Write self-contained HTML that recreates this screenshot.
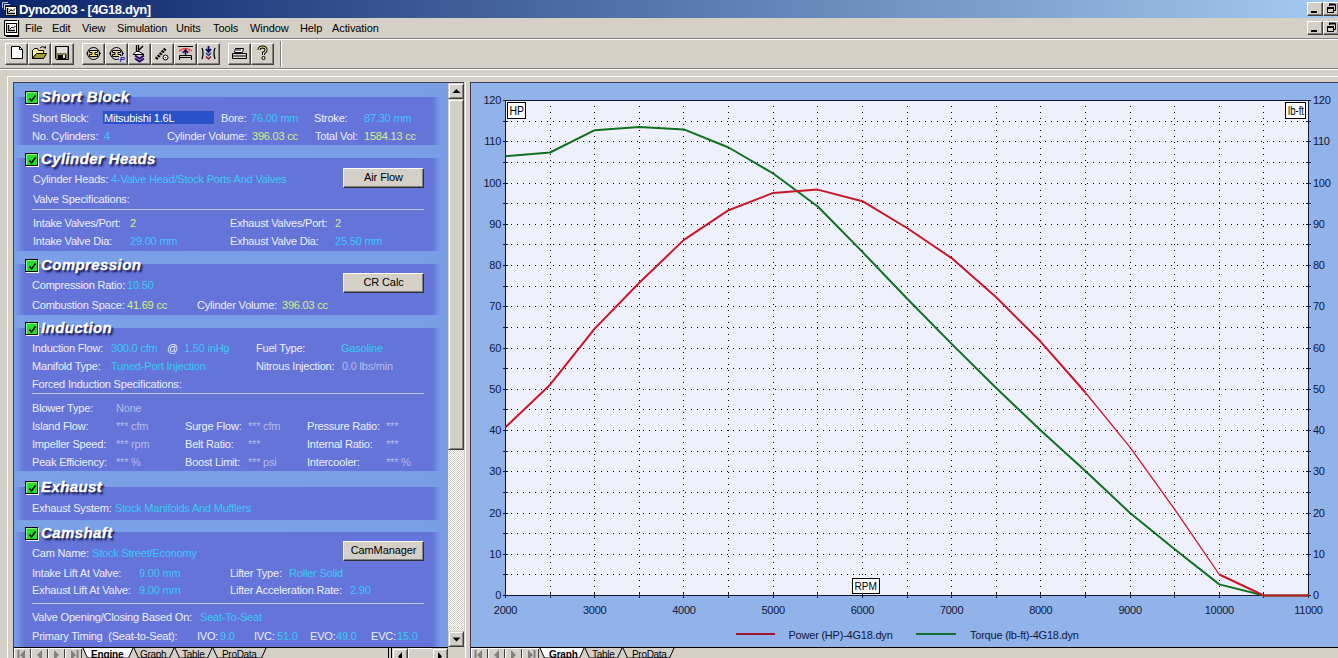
<!DOCTYPE html>
<html><head><meta charset="utf-8"><style>
*{margin:0;padding:0;box-sizing:border-box}
html,body{width:1338px;height:658px;overflow:hidden;background:#d4d0c8;font-family:"Liberation Sans",sans-serif;font-size:11px;position:relative}
.a{position:absolute}
.t{position:absolute;white-space:nowrap;line-height:13px;letter-spacing:-0.2px}
#titlebar{left:0;top:0;width:1338px;height:18px;background:linear-gradient(to right,#0a246a 0%,#a6caf0 100%)}
.wbtn{position:absolute;width:16px;height:14px;background:#d4d0c8;border-top:1px solid #fff;border-left:1px solid #fff;border-right:1px solid #404040;border-bottom:1px solid #404040;box-shadow:inset -1px -1px 0 #808080}
.hl{position:absolute;height:1px}
.vl{position:absolute;width:1px}
.tb{position:absolute;top:43px;width:22px;height:22px;background:#d4d0c8;border-top:1px solid #fff;border-left:1px solid #fff;border-right:1px solid #404040;border-bottom:1px solid #404040;box-shadow:inset -1px -1px 0 #808080}
.sec{position:absolute;left:14px;width:434px;background:linear-gradient(to right,#7aa0e8 0px,#6474d8 11px,#6474d8 418px,#7a9ee4 427px,#7a9ee4 434px)}
.cb{position:absolute;left:25px;width:13px;height:13px;background:#22e02a;border:1px solid #000;box-shadow:1px 1px 0 #fff, inset 1px 1px 0 #90f090}
.st{position:absolute;left:41px;color:#fff;font-weight:bold;font-style:italic;font-size:15px;line-height:16px;letter-spacing:0.4px;-webkit-text-stroke:0.35px #fff;text-shadow:1px 1px 0 #203068,2px 2px 1px #283070,2px 3px 2px #404898}
.lb{color:#eef0ff}
.cy{color:#3cc8f8}
.yl{color:#d8f080}
.gr{color:#b4bce8}
.sep{position:absolute;left:32px;width:392px;height:1px;background:#c0c8f0}
.btn{position:absolute;left:343px;width:81px;height:20px;background:#d4d0c8;border-top:1px solid #fff;border-left:1px solid #fff;border-right:1px solid #303030;border-bottom:1px solid #303030;box-shadow:inset -1px -1px 0 #808080;text-align:center;line-height:17px;color:#000;letter-spacing:-0.1px}
</style></head><body>
<div id="titlebar" class="a"></div>
<div class="t" style="left:19px;top:3px;color:#fff;font-weight:bold;font-size:13px;line-height:14px;letter-spacing:-0.4px">Dyno2003 - [4G18.dyn]</div>
<svg class="a" style="left:0;top:0" width="18" height="18"><path d="M2.5 8 V2.5 H8" fill="none" stroke="#b8c0e0"/><path d="M4.5 10 V4.5 H10" fill="none" stroke="#d0d8f0"/><rect x="5.5" y="6.5" width="11" height="9" fill="#fffcf0" stroke="#101010"/><path d="M7.5 8 V13.5 H15" fill="none" stroke="#000" stroke-width="1.5"/><path d="M9 12 L11 10 L12.5 11 L15 8.5" fill="none" stroke="#000"/><path d="M9 10 L11 9 L13 11 L15 10.5" fill="none" stroke="#806040" stroke-width="0.8"/></svg>
<div class="wbtn" style="left:1307px;top:2px"><div class="a" style="left:3px;top:8px;width:6px;height:2px;background:#000"></div></div>
<div class="wbtn" style="left:1323px;top:2px"><svg class="a" style="left:1px;top:0" width="14" height="12"><path d="M4.5 3 V1.5 H10.5 V7.5 H9" fill="none" stroke="#000"/><path d="M4 1.5 H10.5" stroke="#000" stroke-width="2"/><rect x="2.5" y="4.5" width="6" height="5" fill="none" stroke="#000"/><path d="M2 5 H8.5" stroke="#000" stroke-width="2"/></svg></div>
<div class="a" style="left:0;top:18px;width:1338px;height:20px;background:#d4d0c8"></div>
<svg class="a" style="left:4px;top:20px" width="16" height="17"><path d="M0.5 0.5 H13 L14.5 -1 V15.5 H0.5 Z" fill="#fff" stroke="#000"/><path d="M14.5 2 V16.5 H2" fill="none" stroke="#000" stroke-width="1.2"/><rect x="2.5" y="3.5" width="10" height="9" fill="#fff" stroke="#000"/><path d="M4.5 5 V10.5 H11" fill="none" stroke="#000" stroke-width="1.5"/><path d="M6 9 L8 7 L9.5 8 L11.5 6" fill="none" stroke="#000"/></svg>
<div class="t" style="left:25px;top:22px;color:#000;letter-spacing:-0.1px">File</div>
<div class="t" style="left:52px;top:22px;color:#000;letter-spacing:-0.1px">Edit</div>
<div class="t" style="left:82px;top:22px;color:#000;letter-spacing:-0.1px">View</div>
<div class="t" style="left:117px;top:22px;color:#000;letter-spacing:-0.1px">Simulation</div>
<div class="t" style="left:176px;top:22px;color:#000;letter-spacing:-0.1px">Units</div>
<div class="t" style="left:213px;top:22px;color:#000;letter-spacing:-0.1px">Tools</div>
<div class="t" style="left:250px;top:22px;color:#000;letter-spacing:-0.1px">Window</div>
<div class="t" style="left:300px;top:22px;color:#000;letter-spacing:-0.1px">Help</div>
<div class="t" style="left:332px;top:22px;color:#000;letter-spacing:-0.1px">Activation</div>
<div class="wbtn" style="left:1307px;top:21px"><div class="a" style="left:3px;top:8px;width:6px;height:2px;background:#000"></div></div>
<div class="wbtn" style="left:1323px;top:21px"><svg class="a" style="left:1px;top:0" width="14" height="12"><path d="M4.5 3 V1.5 H10.5 V7.5 H9" fill="none" stroke="#000"/><path d="M4 1.5 H10.5" stroke="#000" stroke-width="2"/><rect x="2.5" y="4.5" width="6" height="5" fill="none" stroke="#000"/><path d="M2 5 H8.5" stroke="#000" stroke-width="2"/></svg></div>
<div class="hl" style="left:0;top:38px;width:1338px;background:#808080"></div>
<div class="hl" style="left:0;top:39px;width:1338px;background:#fff"></div>
<div class="tb" style="left:5px;width:23px"><svg class="a" style="left:-1px;top:-1px" width="23" height="22"><path d="M6.5 3.5 H14.5 L17.5 6.5 V15.5 H6.5 Z" fill="#fff" stroke="#000"/><path d="M14.5 3.5 V6.5 H17.5" fill="none" stroke="#000"/></svg></div>
<div class="tb" style="left:28px;width:23px"><svg class="a" style="left:-1px;top:-1px" width="23" height="22"><path d="M4.5 7.5 L6.5 5.5 H9.5 L10.5 7.5 H15.5 V10.5 H8.5 L4.5 15.5 Z" fill="#f8f0a0" stroke="#000"/><path d="M4.5 15.5 L8.5 10.5 H18.5 L15.5 15.5 Z" fill="#a0a030" stroke="#000"/><path d="M12 5 Q15 2 17 5" fill="none" stroke="#000"/><path d="M16 4 L18 6 L18 3 Z" fill="#000"/></svg></div>
<div class="tb" style="left:51px;width:23px"><svg class="a" style="left:-1px;top:-1px" width="23" height="22"><path d="M4.5 3.5 H17.5 V16.5 H5.5 L4.5 15.5 Z" fill="#808058" stroke="#000"/><rect x="6" y="4" width="10" height="6" fill="#e0e0d8"/><rect x="7" y="12" width="8" height="4" fill="#000"/><rect x="12" y="12" width="2" height="3" fill="#e8e8e0"/></svg></div>
<div class="tb" style="left:82px;width:23px"><svg class="a" style="left:-1px;top:-1px" width="23" height="22"><ellipse cx="11.5" cy="10.5" rx="6" ry="6" fill="none" stroke="#000"/><path d="M7.5 7.5 H15.5 V9.5 H13 V11.5 H15.5 V13.5 H7.5 V11.5 H10 V9.5 H7.5 Z" fill="#e8e070" stroke="#000"/><path d="M4 10.5 L6 8.5 V12.5 Z M19 10.5 L17 8.5 V12.5 Z" fill="#000"/></svg></div>
<div class="tb" style="left:105px;width:23px"><svg class="a" style="left:-1px;top:-1px" width="23" height="22"><ellipse cx="11.5" cy="10.5" rx="6" ry="6" fill="none" stroke="#000"/><path d="M7.5 7.5 H15.5 V9.5 H13 V11.5 H15.5 V13.5 H7.5 V11.5 H10 V9.5 H7.5 Z" fill="#e8e070" stroke="#000"/><path d="M4 10.5 L6 8.5 V12.5 Z M19 10.5 L17 8.5 V12.5 Z" fill="#000"/><rect x="14" y="13" width="6" height="6" fill="#d4d0c8"/><text x="14.5" y="19" font-family="Liberation Sans" font-size="8" font-weight="bold" font-style="italic" fill="#1818c8">P</text></svg></div>
<div class="tb" style="left:128px;width:23px"><svg class="a" style="left:-1px;top:-1px" width="23" height="22"><path d="M8.5 2 V8 M10.5 2 V8" stroke="#000" stroke-width="1.3"/><path d="M11 7 L15 3" stroke="#000" stroke-width="1.5"/><path d="M8 8.5 H11 L16 11.5 H5 Z" fill="#fff" stroke="#000"/><path d="M7 12.5 L11.5 15.5 L16 12.5 M7 15.5 L11.5 18.5 L16 15.5" fill="none" stroke="#280870" stroke-width="2"/></svg></div>
<div class="tb" style="left:151px;width:23px"><svg class="a" style="left:-1px;top:-1px" width="23" height="22"><path d="M5 16 L15 5" stroke="#000" stroke-width="3" stroke-dasharray="2 1"/><circle cx="14.5" cy="14.5" r="2.5" fill="#fff" stroke="#000"/><circle cx="14.5" cy="14.5" r="0.8" fill="#101060"/></svg></div>
<div class="tb" style="left:174px;width:23px"><svg class="a" style="left:-1px;top:-1px" width="23" height="22"><path d="M4 3.5 H19" stroke="#000"/><path d="M5 8 Q11.5 3 18 8" fill="none" stroke="#e04040" stroke-width="1.5"/><path d="M7 9 Q11.5 6 16 9" fill="none" stroke="#e06060" stroke-width="1"/><path d="M11.5 7 V12 M9 10 L11.5 7 L14 10" stroke="#101060" stroke-width="1.5" fill="none"/><path d="M5.5 17 V12.5 H17.5 V17 M5.5 14.5 H17.5" fill="none" stroke="#000"/></svg></div>
<div class="tb" style="left:197px;width:23px"><svg class="a" style="left:-1px;top:-1px" width="23" height="22"><path d="M5 5 Q7 10 5 16 M18 5 Q16 10 18 16" fill="none" stroke="#000" stroke-width="1.3"/><path d="M11.5 3 V8 M9 6 L11.5 9 L14 6" stroke="#101060" stroke-width="1.8" fill="none"/><path d="M9 10 L11.5 12.5 L14 10" stroke="#303080" stroke-width="1.5" fill="none"/><path d="M9 13.5 L11.5 16 L14 13.5" stroke="#802020" stroke-width="1.5" fill="none"/></svg></div>
<div class="tb" style="left:228px;width:23px"><svg class="a" style="left:-1px;top:-1px" width="23" height="22"><path d="M7.5 5.5 H15.5 L14.5 9.5 H6.5 Z" fill="#fff" stroke="#000"/><path d="M4.5 10.5 H18.5 V15.5 H4.5 Z" fill="#d8d8d0" stroke="#000"/><path d="M5 13 H18" stroke="#000"/><path d="M8 7 H13" stroke="#000"/></svg></div>
<div class="tb" style="left:251px;width:23px"><svg class="a" style="left:-1px;top:-1px" width="23" height="22"><path d="M8 7 Q8 4 11.5 4 Q15 4 15 7 Q15 9 12.5 10 V12" fill="none" stroke="#000" stroke-width="3"/><path d="M8 7 Q8 4 11.5 4 Q15 4 15 7 Q15 9 12.5 10 V12" fill="none" stroke="#f0f080" stroke-width="1.2"/><circle cx="12.5" cy="15" r="1.6" fill="#f0f080" stroke="#000"/></svg></div>
<div class="vl" style="left:280px;top:41px;height:26px;background:#808080"></div>
<div class="vl" style="left:281px;top:41px;height:26px;background:#fff"></div>
<div class="hl" style="left:0;top:68px;width:1338px;background:#808080"></div>
<div class="hl" style="left:0;top:69px;width:1338px;background:#fff"></div>
<div class="hl" style="left:7px;top:76px;width:1331px;background:#fff"></div>
<div class="vl" style="left:7px;top:76px;height:582px;background:#fff"></div>
<div class="hl" style="left:13px;top:82px;width:1325px;background:#3c4050"></div>
<div class="vl" style="left:13px;top:82px;height:576px;background:#3c4050"></div>
<div class="a" style="left:14px;top:83px;width:434px;height:564px;background:linear-gradient(to right,#7aa0e8 0,#7a9ee6 100%)"></div>
<div class="sec" style="top:97px;height:48px"></div>
<div class="sec" style="top:158px;height:93px"></div>
<div class="sec" style="top:264px;height:51px"></div>
<div class="sec" style="top:328px;height:143px"></div>
<div class="sec" style="top:487px;height:33px"></div>
<div class="sec" style="top:532px;height:115px"></div>
<div class="cb" style="top:91px"><svg class="a" style="left:1px;top:1px" width="10" height="10"><path d="M2.5 5.5 L4.5 8 L8.5 2.5" stroke="#000" stroke-width="1.5" fill="none"/></svg></div>
<div class="st" style="top:89px">Short Block</div>
<div class="cb" style="top:153px"><svg class="a" style="left:1px;top:1px" width="10" height="10"><path d="M2.5 5.5 L4.5 8 L8.5 2.5" stroke="#000" stroke-width="1.5" fill="none"/></svg></div>
<div class="st" style="top:151px">Cylinder Heads</div>
<div class="cb" style="top:259px"><svg class="a" style="left:1px;top:1px" width="10" height="10"><path d="M2.5 5.5 L4.5 8 L8.5 2.5" stroke="#000" stroke-width="1.5" fill="none"/></svg></div>
<div class="st" style="top:257px">Compression</div>
<div class="cb" style="top:322px"><svg class="a" style="left:1px;top:1px" width="10" height="10"><path d="M2.5 5.5 L4.5 8 L8.5 2.5" stroke="#000" stroke-width="1.5" fill="none"/></svg></div>
<div class="st" style="top:320px">Induction</div>
<div class="cb" style="top:481px"><svg class="a" style="left:1px;top:1px" width="10" height="10"><path d="M2.5 5.5 L4.5 8 L8.5 2.5" stroke="#000" stroke-width="1.5" fill="none"/></svg></div>
<div class="st" style="top:479px">Exhaust</div>
<div class="cb" style="top:527px"><svg class="a" style="left:1px;top:1px" width="10" height="10"><path d="M2.5 5.5 L4.5 8 L8.5 2.5" stroke="#000" stroke-width="1.5" fill="none"/></svg></div>
<div class="st" style="top:525px">Camshaft</div>
<div class="a" style="left:103px;top:111px;width:111px;height:13px;background:#2a52c8"></div>
<div class="t lb" style="left:32px;top:112px;">Short Block:</div>
<div class="t " style="left:104px;top:112px;color:#fff">Mitsubishi 1.6L</div>
<div class="t lb" style="left:221px;top:112px;">Bore:</div>
<div class="t cy" style="left:251px;top:112px;">76.00 mm</div>
<div class="t lb" style="left:314px;top:112px;">Stroke:</div>
<div class="t cy" style="left:364px;top:112px;">87.30 mm</div>
<div class="t lb" style="left:32px;top:130px;">No. Cylinders:</div>
<div class="t cy" style="left:104px;top:130px;">4</div>
<div class="t lb" style="left:167px;top:130px;">Cylinder Volume:</div>
<div class="t yl" style="left:252px;top:130px;">396.03 cc</div>
<div class="t lb" style="left:315px;top:130px;">Total Vol:</div>
<div class="t yl" style="left:364px;top:130px;">1584.13 cc</div>
<div class="t lb" style="left:33px;top:173px;">Cylinder Heads:</div>
<div class="t cy" style="left:111px;top:173px;">4-Valve Head/Stock Ports And Valves</div>
<div class="btn" style="top:168px">Air Flow</div>
<div class="t lb" style="left:33px;top:193px;">Valve Specifications:</div>
<div class="sep" style="top:209px"></div>
<div class="t lb" style="left:33px;top:217px;">Intake Valves/Port:</div>
<div class="t yl" style="left:130px;top:217px;">2</div>
<div class="t lb" style="left:230px;top:217px;">Exhaust Valves/Port:</div>
<div class="t yl" style="left:335px;top:217px;">2</div>
<div class="t lb" style="left:33px;top:235px;">Intake Valve Dia:</div>
<div class="t cy" style="left:130px;top:235px;">29.00 mm</div>
<div class="t lb" style="left:230px;top:235px;">Exhaust Valve Dia:</div>
<div class="t cy" style="left:335px;top:235px;">25.50 mm</div>
<div class="t lb" style="left:32px;top:279px;">Compression Ratio:</div>
<div class="t cy" style="left:127px;top:279px;">10.50</div>
<div class="btn" style="top:273px">CR Calc</div>
<div class="t lb" style="left:32px;top:299px;">Combustion Space:</div>
<div class="t yl" style="left:127px;top:299px;">41.69 cc</div>
<div class="t lb" style="left:197px;top:299px;">Cylinder Volume:</div>
<div class="t yl" style="left:282px;top:299px;">396.03 cc</div>
<div class="t lb" style="left:32px;top:342px;">Induction Flow:</div>
<div class="t cy" style="left:111px;top:342px;">300.0 cfm</div>
<div class="t lb" style="left:167px;top:342px;">@</div>
<div class="t cy" style="left:184px;top:342px;">1.50 inHg</div>
<div class="t lb" style="left:256px;top:342px;">Fuel Type:</div>
<div class="t cy" style="left:341px;top:342px;">Gasoline</div>
<div class="t lb" style="left:32px;top:360px;">Manifold Type:</div>
<div class="t cy" style="left:111px;top:360px;">Tuned-Port Injection</div>
<div class="t lb" style="left:256px;top:360px;">Nitrous Injection:</div>
<div class="t gr" style="left:342px;top:360px;">0.0 lbs/min</div>
<div class="t lb" style="left:32px;top:378px;">Forced Induction Specifications:</div>
<div class="sep" style="top:393px"></div>
<div class="t lb" style="left:32px;top:402px;">Blower Type:</div>
<div class="t gr" style="left:116px;top:402px;">None</div>
<div class="t lb" style="left:32px;top:420px;">Island Flow:</div>
<div class="t gr" style="left:116px;top:420px;">*** cfm</div>
<div class="t lb" style="left:185px;top:420px;">Surge Flow:</div>
<div class="t gr" style="left:248px;top:420px;">*** cfm</div>
<div class="t lb" style="left:307px;top:420px;">Pressure Ratio:</div>
<div class="t gr" style="left:386px;top:420px;">***</div>
<div class="t lb" style="left:32px;top:438px;">Impeller Speed:</div>
<div class="t gr" style="left:116px;top:438px;">*** rpm</div>
<div class="t lb" style="left:185px;top:438px;">Belt Ratio:</div>
<div class="t gr" style="left:248px;top:438px;">***</div>
<div class="t lb" style="left:307px;top:438px;">Internal Ratio:</div>
<div class="t gr" style="left:386px;top:438px;">***</div>
<div class="t lb" style="left:32px;top:456px;">Peak Efficiency:</div>
<div class="t gr" style="left:116px;top:456px;">*** %</div>
<div class="t lb" style="left:185px;top:456px;">Boost Limit:</div>
<div class="t gr" style="left:248px;top:456px;">*** psi</div>
<div class="t lb" style="left:307px;top:456px;">Intercooler:</div>
<div class="t gr" style="left:386px;top:456px;">*** %</div>
<div class="t lb" style="left:32px;top:502px;">Exhaust System:</div>
<div class="t cy" style="left:115px;top:502px;">Stock Manifolds And Mufflers</div>
<div class="t lb" style="left:32px;top:547px;">Cam Name:</div>
<div class="t cy" style="left:92px;top:547px;">Stock Street/Economy</div>
<div class="btn" style="top:541px">CamManager</div>
<div class="t lb" style="left:32px;top:567px;">Intake Lift At Valve:</div>
<div class="t cy" style="left:139px;top:567px;">9.00 mm</div>
<div class="t lb" style="left:230px;top:567px;">Lifter Type:</div>
<div class="t cy" style="left:289px;top:567px;">Roller Solid</div>
<div class="t lb" style="left:32px;top:584px;">Exhaust Lift At Valve:</div>
<div class="t cy" style="left:139px;top:584px;">9.00 mm</div>
<div class="t lb" style="left:230px;top:584px;">Lifter Acceleration Rate:</div>
<div class="t cy" style="left:350px;top:584px;">2.90</div>
<div class="sep" style="top:603px"></div>
<div class="t lb" style="left:32px;top:611px;">Valve Opening/Closing Based On:</div>
<div class="t cy" style="left:200px;top:611px;">Seat-To-Seat</div>
<div class="t lb" style="left:32px;top:630px;">Primary Timing&nbsp; (Seat-to-Seat):</div>
<div class="t lb" style="left:197px;top:630px;">IVO:</div>
<div class="t cy" style="left:220px;top:630px;">9.0</div>
<div class="t lb" style="left:254px;top:630px;">IVC:</div>
<div class="t cy" style="left:277px;top:630px;">51.0</div>
<div class="t lb" style="left:310px;top:630px;">EVO:</div>
<div class="t cy" style="left:336px;top:630px;">49.0</div>
<div class="t lb" style="left:371px;top:630px;">EVC:</div>
<div class="t cy" style="left:397px;top:630px;">15.0</div>
<div class="a" style="left:471px;top:83px;width:867px;height:564px;background:#92b2ea"></div>
<svg class="a" style="left:0;top:0" width="1338" height="658">
<rect x="505" y="100" width="803" height="495" fill="#eef0fc"/>
<line x1="505" y1="574.5" x2="1308" y2="574.5" stroke="#000" stroke-width="1" stroke-dasharray="1 5"/>
<line x1="505" y1="554.5" x2="1308" y2="554.5" stroke="#000" stroke-width="1" stroke-dasharray="1 5"/>
<line x1="505" y1="533.5" x2="1308" y2="533.5" stroke="#000" stroke-width="1" stroke-dasharray="1 5"/>
<line x1="505" y1="513.5" x2="1308" y2="513.5" stroke="#000" stroke-width="1" stroke-dasharray="1 5"/>
<line x1="505" y1="492.5" x2="1308" y2="492.5" stroke="#000" stroke-width="1" stroke-dasharray="1 5"/>
<line x1="505" y1="471.5" x2="1308" y2="471.5" stroke="#000" stroke-width="1" stroke-dasharray="1 5"/>
<line x1="505" y1="451.5" x2="1308" y2="451.5" stroke="#000" stroke-width="1" stroke-dasharray="1 5"/>
<line x1="505" y1="430.5" x2="1308" y2="430.5" stroke="#000" stroke-width="1" stroke-dasharray="1 5"/>
<line x1="505" y1="409.5" x2="1308" y2="409.5" stroke="#000" stroke-width="1" stroke-dasharray="1 5"/>
<line x1="505" y1="389.5" x2="1308" y2="389.5" stroke="#000" stroke-width="1" stroke-dasharray="1 5"/>
<line x1="505" y1="368.5" x2="1308" y2="368.5" stroke="#000" stroke-width="1" stroke-dasharray="1 5"/>
<line x1="505" y1="348.5" x2="1308" y2="348.5" stroke="#000" stroke-width="1" stroke-dasharray="1 5"/>
<line x1="505" y1="327.5" x2="1308" y2="327.5" stroke="#000" stroke-width="1" stroke-dasharray="1 5"/>
<line x1="505" y1="306.5" x2="1308" y2="306.5" stroke="#000" stroke-width="1" stroke-dasharray="1 5"/>
<line x1="505" y1="286.5" x2="1308" y2="286.5" stroke="#000" stroke-width="1" stroke-dasharray="1 5"/>
<line x1="505" y1="265.5" x2="1308" y2="265.5" stroke="#000" stroke-width="1" stroke-dasharray="1 5"/>
<line x1="505" y1="244.5" x2="1308" y2="244.5" stroke="#000" stroke-width="1" stroke-dasharray="1 5"/>
<line x1="505" y1="224.5" x2="1308" y2="224.5" stroke="#000" stroke-width="1" stroke-dasharray="1 5"/>
<line x1="505" y1="203.5" x2="1308" y2="203.5" stroke="#000" stroke-width="1" stroke-dasharray="1 5"/>
<line x1="505" y1="183.5" x2="1308" y2="183.5" stroke="#000" stroke-width="1" stroke-dasharray="1 5"/>
<line x1="505" y1="162.5" x2="1308" y2="162.5" stroke="#000" stroke-width="1" stroke-dasharray="1 5"/>
<line x1="505" y1="141.5" x2="1308" y2="141.5" stroke="#000" stroke-width="1" stroke-dasharray="1 5"/>
<line x1="505" y1="121.5" x2="1308" y2="121.5" stroke="#000" stroke-width="1" stroke-dasharray="1 5"/>
<line x1="550.5" y1="100" x2="550.5" y2="595" stroke="#000" stroke-width="1" stroke-dasharray="1 5"/>
<line x1="594.5" y1="100" x2="594.5" y2="595" stroke="#000" stroke-width="1" stroke-dasharray="1 5"/>
<line x1="639.5" y1="100" x2="639.5" y2="595" stroke="#000" stroke-width="1" stroke-dasharray="1 5"/>
<line x1="683.5" y1="100" x2="683.5" y2="595" stroke="#000" stroke-width="1" stroke-dasharray="1 5"/>
<line x1="728.5" y1="100" x2="728.5" y2="595" stroke="#000" stroke-width="1" stroke-dasharray="1 5"/>
<line x1="773.5" y1="100" x2="773.5" y2="595" stroke="#000" stroke-width="1" stroke-dasharray="1 5"/>
<line x1="817.5" y1="100" x2="817.5" y2="595" stroke="#000" stroke-width="1" stroke-dasharray="1 5"/>
<line x1="862.5" y1="100" x2="862.5" y2="595" stroke="#000" stroke-width="1" stroke-dasharray="1 5"/>
<line x1="907.5" y1="100" x2="907.5" y2="595" stroke="#000" stroke-width="1" stroke-dasharray="1 5"/>
<line x1="951.5" y1="100" x2="951.5" y2="595" stroke="#000" stroke-width="1" stroke-dasharray="1 5"/>
<line x1="996.5" y1="100" x2="996.5" y2="595" stroke="#000" stroke-width="1" stroke-dasharray="1 5"/>
<line x1="1040.5" y1="100" x2="1040.5" y2="595" stroke="#000" stroke-width="1" stroke-dasharray="1 5"/>
<line x1="1085.5" y1="100" x2="1085.5" y2="595" stroke="#000" stroke-width="1" stroke-dasharray="1 5"/>
<line x1="1130.5" y1="100" x2="1130.5" y2="595" stroke="#000" stroke-width="1" stroke-dasharray="1 5"/>
<line x1="1174.5" y1="100" x2="1174.5" y2="595" stroke="#000" stroke-width="1" stroke-dasharray="1 5"/>
<line x1="1219.5" y1="100" x2="1219.5" y2="595" stroke="#000" stroke-width="1" stroke-dasharray="1 5"/>
<line x1="1263.5" y1="100" x2="1263.5" y2="595" stroke="#000" stroke-width="1" stroke-dasharray="1 5"/>
<rect x="505.5" y="100.5" width="803" height="495" fill="none" stroke="#101838" stroke-width="1"/>
<line x1="503" y1="595.5" x2="508" y2="595.5" stroke="#101838"/>
<line x1="1306" y1="595.5" x2="1311" y2="595.5" stroke="#101838"/>
<line x1="503" y1="574.5" x2="508" y2="574.5" stroke="#101838"/>
<line x1="1306" y1="574.5" x2="1311" y2="574.5" stroke="#101838"/>
<line x1="503" y1="554.5" x2="508" y2="554.5" stroke="#101838"/>
<line x1="1306" y1="554.5" x2="1311" y2="554.5" stroke="#101838"/>
<line x1="503" y1="533.5" x2="508" y2="533.5" stroke="#101838"/>
<line x1="1306" y1="533.5" x2="1311" y2="533.5" stroke="#101838"/>
<line x1="503" y1="513.5" x2="508" y2="513.5" stroke="#101838"/>
<line x1="1306" y1="513.5" x2="1311" y2="513.5" stroke="#101838"/>
<line x1="503" y1="492.5" x2="508" y2="492.5" stroke="#101838"/>
<line x1="1306" y1="492.5" x2="1311" y2="492.5" stroke="#101838"/>
<line x1="503" y1="471.5" x2="508" y2="471.5" stroke="#101838"/>
<line x1="1306" y1="471.5" x2="1311" y2="471.5" stroke="#101838"/>
<line x1="503" y1="451.5" x2="508" y2="451.5" stroke="#101838"/>
<line x1="1306" y1="451.5" x2="1311" y2="451.5" stroke="#101838"/>
<line x1="503" y1="430.5" x2="508" y2="430.5" stroke="#101838"/>
<line x1="1306" y1="430.5" x2="1311" y2="430.5" stroke="#101838"/>
<line x1="503" y1="409.5" x2="508" y2="409.5" stroke="#101838"/>
<line x1="1306" y1="409.5" x2="1311" y2="409.5" stroke="#101838"/>
<line x1="503" y1="389.5" x2="508" y2="389.5" stroke="#101838"/>
<line x1="1306" y1="389.5" x2="1311" y2="389.5" stroke="#101838"/>
<line x1="503" y1="368.5" x2="508" y2="368.5" stroke="#101838"/>
<line x1="1306" y1="368.5" x2="1311" y2="368.5" stroke="#101838"/>
<line x1="503" y1="348.5" x2="508" y2="348.5" stroke="#101838"/>
<line x1="1306" y1="348.5" x2="1311" y2="348.5" stroke="#101838"/>
<line x1="503" y1="327.5" x2="508" y2="327.5" stroke="#101838"/>
<line x1="1306" y1="327.5" x2="1311" y2="327.5" stroke="#101838"/>
<line x1="503" y1="306.5" x2="508" y2="306.5" stroke="#101838"/>
<line x1="1306" y1="306.5" x2="1311" y2="306.5" stroke="#101838"/>
<line x1="503" y1="286.5" x2="508" y2="286.5" stroke="#101838"/>
<line x1="1306" y1="286.5" x2="1311" y2="286.5" stroke="#101838"/>
<line x1="503" y1="265.5" x2="508" y2="265.5" stroke="#101838"/>
<line x1="1306" y1="265.5" x2="1311" y2="265.5" stroke="#101838"/>
<line x1="503" y1="244.5" x2="508" y2="244.5" stroke="#101838"/>
<line x1="1306" y1="244.5" x2="1311" y2="244.5" stroke="#101838"/>
<line x1="503" y1="224.5" x2="508" y2="224.5" stroke="#101838"/>
<line x1="1306" y1="224.5" x2="1311" y2="224.5" stroke="#101838"/>
<line x1="503" y1="203.5" x2="508" y2="203.5" stroke="#101838"/>
<line x1="1306" y1="203.5" x2="1311" y2="203.5" stroke="#101838"/>
<line x1="503" y1="183.5" x2="508" y2="183.5" stroke="#101838"/>
<line x1="1306" y1="183.5" x2="1311" y2="183.5" stroke="#101838"/>
<line x1="503" y1="162.5" x2="508" y2="162.5" stroke="#101838"/>
<line x1="1306" y1="162.5" x2="1311" y2="162.5" stroke="#101838"/>
<line x1="503" y1="141.5" x2="508" y2="141.5" stroke="#101838"/>
<line x1="1306" y1="141.5" x2="1311" y2="141.5" stroke="#101838"/>
<line x1="503" y1="121.5" x2="508" y2="121.5" stroke="#101838"/>
<line x1="1306" y1="121.5" x2="1311" y2="121.5" stroke="#101838"/>
<line x1="503" y1="100.5" x2="508" y2="100.5" stroke="#101838"/>
<line x1="1306" y1="100.5" x2="1311" y2="100.5" stroke="#101838"/>
<line x1="505.5" y1="592" x2="505.5" y2="598" stroke="#101838"/>
<line x1="550.5" y1="592" x2="550.5" y2="598" stroke="#101838"/>
<line x1="594.5" y1="592" x2="594.5" y2="598" stroke="#101838"/>
<line x1="639.5" y1="592" x2="639.5" y2="598" stroke="#101838"/>
<line x1="683.5" y1="592" x2="683.5" y2="598" stroke="#101838"/>
<line x1="728.5" y1="592" x2="728.5" y2="598" stroke="#101838"/>
<line x1="773.5" y1="592" x2="773.5" y2="598" stroke="#101838"/>
<line x1="817.5" y1="592" x2="817.5" y2="598" stroke="#101838"/>
<line x1="862.5" y1="592" x2="862.5" y2="598" stroke="#101838"/>
<line x1="907.5" y1="592" x2="907.5" y2="598" stroke="#101838"/>
<line x1="951.5" y1="592" x2="951.5" y2="598" stroke="#101838"/>
<line x1="996.5" y1="592" x2="996.5" y2="598" stroke="#101838"/>
<line x1="1040.5" y1="592" x2="1040.5" y2="598" stroke="#101838"/>
<line x1="1085.5" y1="592" x2="1085.5" y2="598" stroke="#101838"/>
<line x1="1130.5" y1="592" x2="1130.5" y2="598" stroke="#101838"/>
<line x1="1174.5" y1="592" x2="1174.5" y2="598" stroke="#101838"/>
<line x1="1219.5" y1="592" x2="1219.5" y2="598" stroke="#101838"/>
<line x1="1263.5" y1="592" x2="1263.5" y2="598" stroke="#101838"/>
<line x1="1308.5" y1="592" x2="1308.5" y2="598" stroke="#101838"/>
<text x="501" y="599.0" text-anchor="end" font-family="Liberation Sans" font-size="11" fill="#101838" letter-spacing="-0.3">0</text>
<text x="1313" y="599.0" font-family="Liberation Sans" font-size="11" fill="#101838" letter-spacing="-0.3">0</text>
<text x="501" y="558.0" text-anchor="end" font-family="Liberation Sans" font-size="11" fill="#101838" letter-spacing="-0.3">10</text>
<text x="1313" y="558.0" font-family="Liberation Sans" font-size="11" fill="#101838" letter-spacing="-0.3">10</text>
<text x="501" y="517.0" text-anchor="end" font-family="Liberation Sans" font-size="11" fill="#101838" letter-spacing="-0.3">20</text>
<text x="1313" y="517.0" font-family="Liberation Sans" font-size="11" fill="#101838" letter-spacing="-0.3">20</text>
<text x="501" y="475.0" text-anchor="end" font-family="Liberation Sans" font-size="11" fill="#101838" letter-spacing="-0.3">30</text>
<text x="1313" y="475.0" font-family="Liberation Sans" font-size="11" fill="#101838" letter-spacing="-0.3">30</text>
<text x="501" y="434.0" text-anchor="end" font-family="Liberation Sans" font-size="11" fill="#101838" letter-spacing="-0.3">40</text>
<text x="1313" y="434.0" font-family="Liberation Sans" font-size="11" fill="#101838" letter-spacing="-0.3">40</text>
<text x="501" y="393.0" text-anchor="end" font-family="Liberation Sans" font-size="11" fill="#101838" letter-spacing="-0.3">50</text>
<text x="1313" y="393.0" font-family="Liberation Sans" font-size="11" fill="#101838" letter-spacing="-0.3">50</text>
<text x="501" y="352.0" text-anchor="end" font-family="Liberation Sans" font-size="11" fill="#101838" letter-spacing="-0.3">60</text>
<text x="1313" y="352.0" font-family="Liberation Sans" font-size="11" fill="#101838" letter-spacing="-0.3">60</text>
<text x="501" y="310.0" text-anchor="end" font-family="Liberation Sans" font-size="11" fill="#101838" letter-spacing="-0.3">70</text>
<text x="1313" y="310.0" font-family="Liberation Sans" font-size="11" fill="#101838" letter-spacing="-0.3">70</text>
<text x="501" y="269.0" text-anchor="end" font-family="Liberation Sans" font-size="11" fill="#101838" letter-spacing="-0.3">80</text>
<text x="1313" y="269.0" font-family="Liberation Sans" font-size="11" fill="#101838" letter-spacing="-0.3">80</text>
<text x="501" y="228.0" text-anchor="end" font-family="Liberation Sans" font-size="11" fill="#101838" letter-spacing="-0.3">90</text>
<text x="1313" y="228.0" font-family="Liberation Sans" font-size="11" fill="#101838" letter-spacing="-0.3">90</text>
<text x="501" y="187.0" text-anchor="end" font-family="Liberation Sans" font-size="11" fill="#101838" letter-spacing="-0.3">100</text>
<text x="1313" y="187.0" font-family="Liberation Sans" font-size="11" fill="#101838" letter-spacing="-0.3">100</text>
<text x="501" y="145.0" text-anchor="end" font-family="Liberation Sans" font-size="11" fill="#101838" letter-spacing="-0.3">110</text>
<text x="1313" y="145.0" font-family="Liberation Sans" font-size="11" fill="#101838" letter-spacing="-0.3">110</text>
<text x="501" y="104.0" text-anchor="end" font-family="Liberation Sans" font-size="11" fill="#101838" letter-spacing="-0.3">120</text>
<text x="1313" y="104.0" font-family="Liberation Sans" font-size="11" fill="#101838" letter-spacing="-0.3">120</text>
<text x="505.5" y="614" text-anchor="middle" font-family="Liberation Sans" font-size="11" fill="#101838" letter-spacing="-0.3">2000</text>
<text x="594.7" y="614" text-anchor="middle" font-family="Liberation Sans" font-size="11" fill="#101838" letter-spacing="-0.3">3000</text>
<text x="683.9" y="614" text-anchor="middle" font-family="Liberation Sans" font-size="11" fill="#101838" letter-spacing="-0.3">4000</text>
<text x="773.2" y="614" text-anchor="middle" font-family="Liberation Sans" font-size="11" fill="#101838" letter-spacing="-0.3">5000</text>
<text x="862.4" y="614" text-anchor="middle" font-family="Liberation Sans" font-size="11" fill="#101838" letter-spacing="-0.3">6000</text>
<text x="951.6" y="614" text-anchor="middle" font-family="Liberation Sans" font-size="11" fill="#101838" letter-spacing="-0.3">7000</text>
<text x="1040.8" y="614" text-anchor="middle" font-family="Liberation Sans" font-size="11" fill="#101838" letter-spacing="-0.3">8000</text>
<text x="1130.1" y="614" text-anchor="middle" font-family="Liberation Sans" font-size="11" fill="#101838" letter-spacing="-0.3">9000</text>
<text x="1219.3" y="614" text-anchor="middle" font-family="Liberation Sans" font-size="11" fill="#101838" letter-spacing="-0.3">10000</text>
<text x="1308.5" y="614" text-anchor="middle" font-family="Liberation Sans" font-size="11" fill="#101838" letter-spacing="-0.3">11000</text>
<polyline points="505.5,156.2 550.1,152.5 594.7,130.2 639.3,126.9 683.9,129.4 728.6,147.5 773.2,173.5 817.8,206.5 862.4,251.9 907.0,298.5 951.6,343.9 996.2,388.0 1040.8,430.5 1085.4,470.9 1130.1,513.0 1174.7,549.3 1219.3,584.4 1263.9,595.5 1308.5,595.5" fill="none" stroke="#107020" stroke-width="2" stroke-linejoin="round"/>
<polyline points="505.5,427.2 550.1,384.7 594.7,328.6 639.3,282.8 683.9,239.9 728.6,210.2 773.2,192.9 817.8,189.6 862.4,201.2 907.0,228.0 951.6,258.1 996.2,297.3 1040.8,341.8 1085.4,392.5" fill="none" stroke="#c81828" stroke-width="2" stroke-linejoin="round"/>
<polyline points="1085.4,392.5 1130.1,447.4 1174.7,509.3 1219.3,574.5" fill="none" stroke="#c81828" stroke-width="1.3" stroke-linejoin="round"/>
<polyline points="1219.3,574.5 1263.9,595.5 1308.5,595.5" fill="none" stroke="#c81828" stroke-width="2" stroke-linejoin="round"/>
<rect x="507.5" y="102.5" width="18" height="16" fill="#fff" stroke="#000"/>
<text x="509.5" y="115" font-family="Liberation Sans" font-size="12.5" fill="#000" textLength="14.5" lengthAdjust="spacingAndGlyphs">HP</text>
<rect x="1285.5" y="102.5" width="20" height="16" fill="#fff" stroke="#000"/>
<text x="1288" y="115" font-family="Liberation Sans" font-size="12.5" fill="#000" textLength="16" lengthAdjust="spacingAndGlyphs">lb-ft</text>
<rect x="852.5" y="578.5" width="27" height="15" fill="#fff" stroke="#000"/>
<text x="854.5" y="590" font-family="Liberation Sans" font-size="11.5" fill="#000" textLength="22.5" lengthAdjust="spacingAndGlyphs">RPM</text>
<rect x="736" y="633" width="39" height="2" fill="#a01830"/>
<text x="788.5" y="639" font-family="Liberation Sans" font-size="11" fill="#101838" letter-spacing="-0.22">Power (HP)-4G18.dyn</text>
<rect x="916" y="633" width="40" height="2" fill="#107030"/>
<text x="970" y="639" font-family="Liberation Sans" font-size="11" fill="#101838" letter-spacing="-0.22">Torque (lb-ft)-4G18.dyn</text>
</svg>
<div class="a" style="left:448px;top:83px;width:16px;height:564px;background-color:#fff;background-image:linear-gradient(45deg,#d4d0c8 25%,transparent 25%,transparent 75%,#d4d0c8 75%),linear-gradient(45deg,#d4d0c8 25%,transparent 25%,transparent 75%,#d4d0c8 75%);background-size:2px 2px;background-position:0 0,1px 1px"></div>
<div class="a" style="left:448px;top:83px;width:16px;height:16px;background:#d4d0c8;border-top:1px solid #d4d0c8;border-left:1px solid #d4d0c8;border-right:1px solid #404040;border-bottom:1px solid #404040;box-shadow:inset 1px 1px 0 #fff,inset -1px -1px 0 #808080"><svg class="a" style="left:3px;top:4px" width="9" height="6"><path d="M0.5 5 L4.5 1 L8.5 5 Z" fill="#000"/></svg></div>
<div class="a" style="left:448px;top:99px;width:16px;height:351px;background:#d4d0c8;border-top:1px solid #d4d0c8;border-left:1px solid #d4d0c8;border-right:1px solid #404040;border-bottom:1px solid #404040;box-shadow:inset 1px 1px 0 #fff,inset -1px -1px 0 #808080"></div>
<div class="a" style="left:448px;top:631px;width:16px;height:16px;background:#d4d0c8;border-top:1px solid #d4d0c8;border-left:1px solid #d4d0c8;border-right:1px solid #404040;border-bottom:1px solid #404040;box-shadow:inset 1px 1px 0 #fff,inset -1px -1px 0 #808080"><svg class="a" style="left:3px;top:5px" width="9" height="6"><path d="M0.5 0.5 L4.5 4.5 L8.5 0.5 Z" fill="#000"/></svg></div>
<div class="a" style="left:464px;top:77px;width:6px;height:581px;background:#d4d0c8"></div>
<div class="vl" style="left:465px;top:82px;height:576px;background:#fff"></div>
<div class="vl" style="left:470px;top:82px;height:576px;background:#3c4050"></div>
<div class="hl" style="left:13px;top:82px;width:451px;background:#3c4050"></div>
<div class="vl" style="left:13px;top:82px;height:576px;background:#3c4050"></div>
<div class="a" style="left:14px;top:647px;width:450px;height:11px;background:#d4d0c8;border-top:1px solid #000"></div>
<div class="a" style="left:14px;top:648px;width:17px;height:10px;background:#d4d0c8;box-shadow:inset 1px 1px 0 #fff,inset -1px 0 0 #404040"><svg class="a" style="left:1px;top:0" width="14" height="12"><path d="M3.5 2 V12" stroke="#808080" stroke-width="2"/><path d="M10 2 L5 7 L10 12 Z" fill="#808080"/></svg></div>
<div class="a" style="left:31px;top:648px;width:17px;height:10px;background:#d4d0c8;box-shadow:inset 1px 1px 0 #fff,inset -1px 0 0 #404040"><svg class="a" style="left:1px;top:0" width="14" height="12"><path d="M10 2 L5 7 L10 12 Z" fill="#808080"/></svg></div>
<div class="a" style="left:48px;top:648px;width:17px;height:10px;background:#d4d0c8;box-shadow:inset 1px 1px 0 #fff,inset -1px 0 0 #404040"><svg class="a" style="left:1px;top:0" width="14" height="12"><path d="M5 2 L10 7 L5 12 Z" fill="#808080"/></svg></div>
<div class="a" style="left:65px;top:648px;width:17px;height:10px;background:#d4d0c8;box-shadow:inset 1px 1px 0 #fff,inset -1px 0 0 #404040"><svg class="a" style="left:1px;top:0" width="14" height="12"><path d="M11.5 2 V12" stroke="#808080" stroke-width="2"/><path d="M5 2 L10 7 L5 12 Z" fill="#808080"/></svg></div>
<svg class="a" style="left:0;top:647px" width="1338" height="11">
<path d="M133.5 0 L138.5 11 L169.5 11 L174.5 0" fill="#d4d0c8" stroke="#000" stroke-width="1"/>
<path d="M174.5 0 L179.5 11 L207.5 11 L212.5 0" fill="#d4d0c8" stroke="#000" stroke-width="1"/>
<path d="M212.5 0 L217.5 11 L261.5 11 L266.5 0" fill="#d4d0c8" stroke="#000" stroke-width="1"/>
<path d="M82.5 0 L87.5 11 L128.5 11 L133.5 0" fill="#fff" stroke="#000" stroke-width="1"/>
</svg>
<div class="t" style="left:91px;top:648px;color:#000;font-weight:bold;font-size:10px;line-height:13px;letter-spacing:-0.15px">Engine</div>
<div class="t" style="left:140px;top:648px;color:#000;font-weight:normal;font-size:10px;line-height:13px;letter-spacing:-0.3px">Graph</div>
<div class="t" style="left:182px;top:648px;color:#000;font-weight:normal;font-size:10px;line-height:13px;letter-spacing:-0.3px">Table</div>
<div class="t" style="left:222px;top:648px;color:#000;font-weight:normal;font-size:10px;line-height:13px;letter-spacing:-0.3px">ProData</div>
<div class="hl" style="left:14px;top:647px;width:450px;background:#000"></div>
<div class="a" style="left:471px;top:647px;width:867px;height:11px;background:#d4d0c8;border-top:1px solid #000"></div>
<div class="a" style="left:471px;top:648px;width:17px;height:10px;background:#d4d0c8;box-shadow:inset 1px 1px 0 #fff,inset -1px 0 0 #404040"><svg class="a" style="left:1px;top:0" width="14" height="12"><path d="M3.5 2 V12" stroke="#808080" stroke-width="2"/><path d="M10 2 L5 7 L10 12 Z" fill="#808080"/></svg></div>
<div class="a" style="left:488px;top:648px;width:17px;height:10px;background:#d4d0c8;box-shadow:inset 1px 1px 0 #fff,inset -1px 0 0 #404040"><svg class="a" style="left:1px;top:0" width="14" height="12"><path d="M10 2 L5 7 L10 12 Z" fill="#808080"/></svg></div>
<div class="a" style="left:505px;top:648px;width:17px;height:10px;background:#d4d0c8;box-shadow:inset 1px 1px 0 #fff,inset -1px 0 0 #404040"><svg class="a" style="left:1px;top:0" width="14" height="12"><path d="M5 2 L10 7 L5 12 Z" fill="#808080"/></svg></div>
<div class="a" style="left:522px;top:648px;width:17px;height:10px;background:#d4d0c8;box-shadow:inset 1px 1px 0 #fff,inset -1px 0 0 #404040"><svg class="a" style="left:1px;top:0" width="14" height="12"><path d="M11.5 2 V12" stroke="#808080" stroke-width="2"/><path d="M5 2 L10 7 L5 12 Z" fill="#808080"/></svg></div>
<svg class="a" style="left:0;top:647px" width="1338" height="11">
<path d="M584.5 0 L589.5 11 L617.5 11 L622.5 0" fill="#d4d0c8" stroke="#000" stroke-width="1"/>
<path d="M622.5 0 L627.5 11 L669.5 11 L674.5 0" fill="#d4d0c8" stroke="#000" stroke-width="1"/>
<path d="M539.5 0 L544.5 11 L579.5 11 L584.5 0" fill="#fff" stroke="#000" stroke-width="1"/>
</svg>
<div class="t" style="left:549px;top:648px;color:#000;font-weight:bold;font-size:10px;line-height:13px;letter-spacing:-0.15px">Graph</div>
<div class="t" style="left:592px;top:648px;color:#000;font-weight:normal;font-size:10px;line-height:13px;letter-spacing:-0.3px">Table</div>
<div class="t" style="left:632px;top:648px;color:#000;font-weight:normal;font-size:10px;line-height:13px;letter-spacing:-0.3px">ProData</div>
<div class="hl" style="left:471px;top:647px;width:867px;background:#000"></div>
<div class="vl" style="left:388px;top:647px;height:11px;background:#000"></div>
<div class="vl" style="left:391px;top:647px;height:11px;background:#000"></div>
<div class="a" style="left:392px;top:648px;width:16px;height:12px;background:#d4d0c8;border-top:1px solid #d4d0c8;border-left:1px solid #d4d0c8;border-right:1px solid #404040;border-bottom:1px solid #404040;box-shadow:inset 1px 1px 0 #fff,inset -1px -1px 0 #808080"><svg class="a" style="left:4px;top:3px" width="6" height="9"><path d="M5 0 L1 4.5 L5 9 Z" fill="#000"/></svg></div>
<div class="a" style="left:408px;top:648px;width:24px;height:10px;background:#d4d0c8;box-shadow:inset 1px 1px 0 #fff"></div>
<div class="a" style="left:432px;top:648px;width:16px;height:12px;background:#d4d0c8;border-top:1px solid #d4d0c8;border-left:1px solid #d4d0c8;border-right:1px solid #404040;border-bottom:1px solid #404040;box-shadow:inset 1px 1px 0 #fff,inset -1px -1px 0 #808080"><svg class="a" style="left:5px;top:3px" width="6" height="9"><path d="M0 0 L4 4.5 L0 9 Z" fill="#000"/></svg></div>
<div class="a" style="left:448px;top:647px;width:16px;height:11px;background:#d4d0c8"></div>
<div class="vl" style="left:464px;top:647px;height:11px;background:#d4d0c8"></div>
<div class="vl" style="left:465px;top:647px;height:11px;background:#fff"></div>
<div class="vl" style="left:470px;top:647px;height:11px;background:#3c4050"></div>
</body></html>
